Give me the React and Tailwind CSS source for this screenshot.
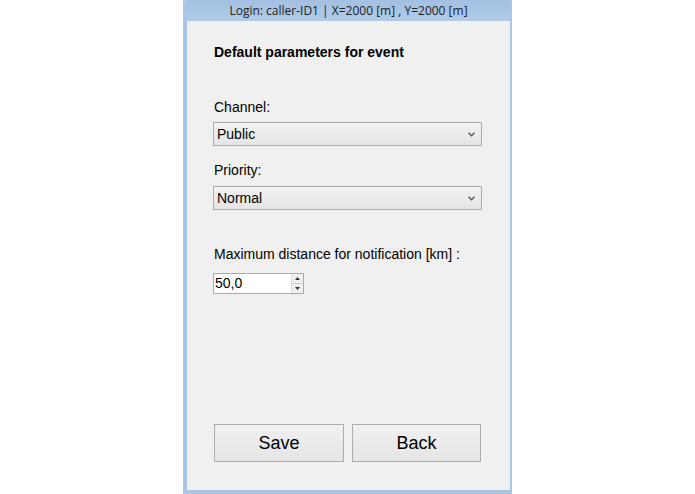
import React from "react";

function Select({ value }) {
  return (
    <div className="flex h-[24px] w-[269px] items-center justify-between border border-[#acacac] bg-gradient-to-b from-[#f2f2f2] to-[#e5e5e5] pl-[3px] pr-[6px]">
      <span className="text-[14px] text-black">{value}</span>
      <svg width="7" height="5" viewBox="0 0 7 5">
        <path d="M0.5 0.8 L3.5 3.8 L6.5 0.8" fill="none" stroke="#555" strokeWidth="1.4" />
      </svg>
    </div>
  );
}

export default function App() {
  return (
    <div className="flex h-[494px] w-[695px] justify-center bg-white" style={{ fontFamily: '"Liberation Sans", Arial, sans-serif' }}>
      <div className="flex h-[494px] w-[329px] flex-col bg-[#aac6e6] pb-[4px] pl-[4px] pr-[2px]">
        <div className="flex h-[21px] items-center justify-center bg-gradient-to-b from-[#a3c0e2] to-[#b0cbe8] text-[12px] text-[#222]" style={{ fontFamily: '"Open Sans", "Noto Sans", sans-serif' }}>
          Login: caller-ID1 | X=2000 [m] , Y=2000 [m]
        </div>
        <div className="flex flex-1 flex-col bg-[#f0f0f0] pl-[26px]">
          <div className="ml-[1px] mt-[21px] text-[14px] font-bold text-black">Default parameters for event</div>
          <div className="ml-[1px] mt-[34px] text-[14px] text-black">Channel:</div>
          <div className="mt-[4px]"><Select value="Public" /></div>
          <div className="ml-[1px] mt-[14px] text-[14px] text-black">Priority:</div>
          <div className="mt-[5px]"><Select value="Normal" /></div>
          <div className="ml-[1px] mt-[34px] text-[14px] text-black">Maximum distance for notification [km] :</div>
          <div className="mt-[8px] flex h-[21px] w-[91px] border border-[#acacac] bg-white">
            <div className="flex flex-1 items-center pl-[1px] text-[14px] text-black">50,0</div>
            <div className="flex w-[12px] flex-col border-l border-[#dcdcdc] bg-[#f0f0f0]">
              <div className="flex flex-1 items-center justify-center border-b border-[#d0d0d0]">
                <svg width="5" height="3" viewBox="0 0 5 3"><path d="M0 3 L2.5 0 L5 3 Z" fill="#333" /></svg>
              </div>
              <div className="flex flex-1 items-center justify-center">
                <svg width="5" height="3" viewBox="0 0 5 3"><path d="M0 0 L2.5 3 L5 0 Z" fill="#333" /></svg>
              </div>
            </div>
          </div>
          <div className="flex-1" />
          <div className="mb-[28px] ml-[1px] flex gap-[8px]">
            <button className="flex h-[38px] w-[130px] items-center justify-center border border-[#acacac] bg-gradient-to-b from-[#f0f0f0] to-[#e5e5e5] text-[18px] text-black">Save</button>
            <button className="flex h-[38px] w-[129px] items-center justify-center border border-[#acacac] bg-gradient-to-b from-[#f0f0f0] to-[#e5e5e5] text-[18px] text-black">Back</button>
          </div>
        </div>
      </div>
    </div>
  );
}
